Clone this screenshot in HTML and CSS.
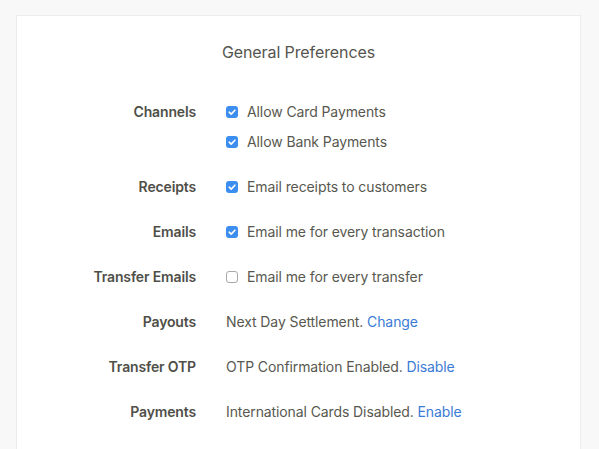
FILE: index.html
```html
<!DOCTYPE html>
<html>

<head>
    <title>Settings</title>
    <link rel="stylesheet" href="styles.css">
</head>

<body>

    <div class="card">
        <h2>General Preferences</h2>

        <div class="prefs">
            <div class="label">Channels</div>
            <div class="value">
                <div class="check"><span class="box on"><svg viewBox="0 0 12 12"><path d="M3.2 6.2 L5.2 8.1 L8.9 4.2" /></svg></span>Allow Card Payments</div>
                <div class="check"><span class="box on"><svg viewBox="0 0 12 12"><path d="M3.2 6.2 L5.2 8.1 L8.9 4.2" /></svg></span>Allow Bank Payments</div>
            </div>

            <div class="label">Receipts</div>
            <div class="value">
                <div class="check"><span class="box on"><svg viewBox="0 0 12 12"><path d="M3.2 6.2 L5.2 8.1 L8.9 4.2" /></svg></span>Email receipts to customers</div>
            </div>

            <div class="label">Emails</div>
            <div class="value">
                <div class="check"><span class="box on"><svg viewBox="0 0 12 12"><path d="M3.2 6.2 L5.2 8.1 L8.9 4.2" /></svg></span>Email me for every transaction</div>
            </div>

            <div class="label">Transfer Emails</div>
            <div class="value">
                <div class="check"><span class="box"></span>Email me for every transfer</div>
            </div>

            <div class="label">Payouts</div>
            <div class="value">Next Day Settlement. <a href="#">Change</a></div>

            <div class="label">Transfer OTP</div>
            <div class="value">OTP Confirmation Enabled. <a href="#">Disable</a></div>

            <div class="label">Payments</div>
            <div class="value">International Cards Disabled. <a href="#">Enable</a></div>
        </div>
    </div>

</body>

</html>
```

FILE: styles.css
```css
body {
    margin: 0;
    padding: 15px 18px 0 16px;
    font-family: Inter, "Noto Sans", sans-serif;
    background-color: #f8f8f8;
    color: #58584f;
    font-size: 14px;
    line-height: 20px;
    letter-spacing: -0.1px;
}

.card {
    background-color: #fff;
    border: 1px solid #ececec;
    border-bottom: none;
    height: 408px;
    padding-top: 26px;
}

h2 {
    margin: 0;
    text-align: center;
    font-size: 16px;
    font-weight: 400;
    line-height: 20px;
    color: #55554f;
}

.prefs {
    display: grid;
    grid-template-columns: 179px 1fr;
    column-gap: 30px;
    row-gap: 25px;
    margin-top: 40px;
}

.label {
    text-align: right;
    font-weight: 600;
    color: #4f4f48;
    letter-spacing: -0.15px;
}

.value .check + .check {
    margin-top: 10px;
}

.check {
    display: flex;
    align-items: center;
}

.box {
    width: 12px;
    height: 12px;
    box-sizing: border-box;
    border: 1px solid #a9a9a9;
    border-radius: 3px;
    margin-right: 9px;
    background-color: #fff;
    display: inline-block;
}

.box.on {
    border: none;
    background-color: #3b8ef0;
}

.box svg {
    display: block;
    width: 12px;
    height: 12px;
}

.box svg path {
    fill: none;
    stroke: #fff;
    stroke-width: 1.6;
    stroke-linecap: round;
    stroke-linejoin: round;
}

a {
    color: #3a7bd5;
    text-decoration: none;
}
```
